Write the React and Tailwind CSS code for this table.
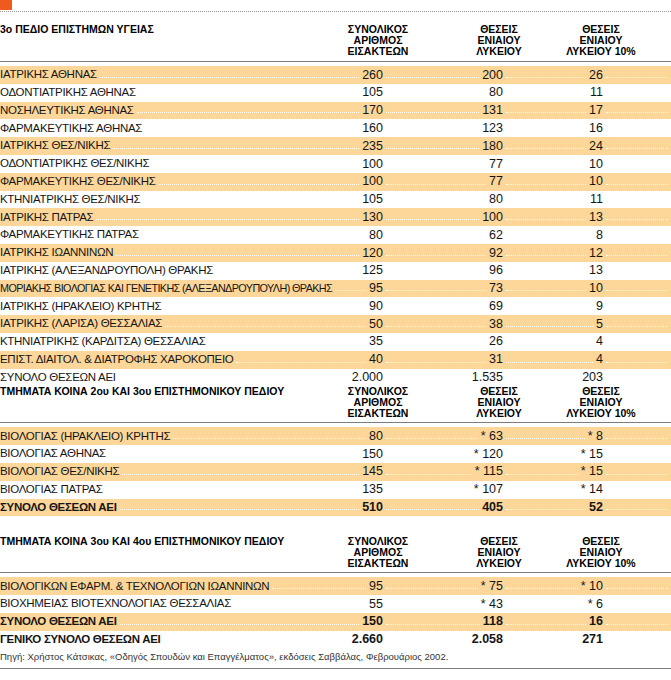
import clsx from "clsx";

const FONT = { fontFamily: '"Liberation Sans", Arial, sans-serif' };

const section1 = [
  ["ΙΑΤΡΙΚΗΣ ΑΘΗΝΑΣ", "260", "200", "26"],
  ["ΟΔΟΝΤΙΑΤΡΙΚΗΣ ΑΘΗΝΑΣ", "105", "80", "11"],
  ["ΝΟΣΗΛΕΥΤΙΚΗΣ ΑΘΗΝΑΣ", "170", "131", "17"],
  ["ΦΑΡΜΑΚΕΥΤΙΚΗΣ ΑΘΗΝΑΣ", "160", "123", "16"],
  ["ΙΑΤΡΙΚΗΣ ΘΕΣ/ΝΙΚΗΣ", "235", "180", "24"],
  ["ΟΔΟΝΤΙΑΤΡΙΚΗΣ ΘΕΣ/ΝΙΚΗΣ", "100", "77", "10"],
  ["ΦΑΡΜΑΚΕΥΤΙΚΗΣ ΘΕΣ/ΝΙΚΗΣ", "100", "77", "10"],
  ["ΚΤΗΝΙΑΤΡΙΚΗΣ ΘΕΣ/ΝΙΚΗΣ", "105", "80", "11"],
  ["ΙΑΤΡΙΚΗΣ ΠΑΤΡΑΣ", "130", "100", "13"],
  ["ΦΑΡΜΑΚΕΥΤΙΚΗΣ ΠΑΤΡΑΣ", "80", "62", "8"],
  ["ΙΑΤΡΙΚΗΣ ΙΩΑΝΝΙΝΩΝ", "120", "92", "12"],
  ["ΙΑΤΡΙΚΗΣ (ΑΛΕΞΑΝΔΡΟΥΠΟΛΗ) ΘΡΑΚΗΣ", "125", "96", "13"],
  ["ΜΟΡΙΑΚΗΣ ΒΙΟΛΟΓΙΑΣ ΚΑΙ ΓΕΝΕΤΙΚΗΣ (ΑΛΕΞΑΝΔΡΟΥΠΟΥΛΗ) ΘΡΑΚΗΣ", "95", "73", "10"],
  ["ΙΑΤΡΙΚΗΣ (ΗΡΑΚΛΕΙΟ) ΚΡΗΤΗΣ", "90", "69", "9"],
  ["ΙΑΤΡΙΚΗΣ (ΛΑΡΙΣΑ) ΘΕΣΣΑΛΙΑΣ", "50", "38", "5"],
  ["ΚΤΗΝΙΑΤΡΙΚΗΣ (ΚΑΡΔΙΤΣΑ) ΘΕΣΣΑΛΙΑΣ", "35", "26", "4"],
  ["ΕΠΙΣΤ. ΔΙΑΙΤΟΛ. & ΔΙΑΤΡΟΦΗΣ ΧΑΡΟΚΟΠΕΙΟ", "40", "31", "4"],
];

const section2 = [
  ["ΒΙΟΛΟΓΙΑΣ (ΗΡΑΚΛΕΙΟ) ΚΡΗΤΗΣ", "80", "* 63", "* 8"],
  ["ΒΙΟΛΟΓΙΑΣ ΑΘΗΝΑΣ", "150", "* 120", "* 15"],
  ["ΒΙΟΛΟΓΙΑΣ ΘΕΣ/ΝΙΚΗΣ", "145", "* 115", "* 15"],
  ["ΒΙΟΛΟΓΙΑΣ ΠΑΤΡΑΣ", "135", "* 107", "* 14"],
];

const section3 = [
  ["ΒΙΟΛΟΓΙΚΩΝ ΕΦΑΡΜ. & ΤΕΧΝΟΛΟΓΙΩΝ ΙΩΑΝΝΙΝΩΝ", "95", "* 75", "* 10"],
  ["ΒΙΟΧΗΜΕΙΑΣ ΒΙΟΤΕΧΝΟΛΟΓΙΑΣ ΘΕΣΣΑΛΙΑΣ", "55", "* 43", "* 6"],
];

function Dots() {
  return <span className="mx-[3px] mb-[6px] h-0 flex-1 self-end border-b border-dotted border-white" />;
}

function Row({ label, a, b, c, band, bold }) {
  // the long molecular-biology label is set tighter in the original
  const tight = label.length > 50;
  return (
    <div
      className={clsx(
        "flex h-[17.8px] items-stretch text-[#151515]",
        band && "bg-[#fdd69a]",
        bold && "font-bold"
      )}
    >
      <div className="flex w-[383px] items-center">
        <span
          className={clsx(
            "whitespace-nowrap",
            tight ? "text-[10.8px] tracking-[-0.6px]" : "text-[11.5px] tracking-[-0.3px]"
          )}
        >
          {label}
        </span>
        <Dots />
        <span className="whitespace-nowrap text-[12.5px]">{a}</span>
      </div>
      <div className="flex w-[120px] items-center">
        <Dots />
        <span className="whitespace-nowrap text-[12.5px]">{b}</span>
      </div>
      <div className="flex w-[100px] items-center">
        <Dots />
        <span className="whitespace-nowrap text-[12.5px]">{c}</span>
      </div>
      <div className="flex flex-1">
        <Dots />
      </div>
    </div>
  );
}

function Header({ title }) {
  return (
    <div className="flex items-start text-[10.5px] font-bold leading-[11px] text-black">
      <div className="w-[338px] whitespace-nowrap">{title}</div>
      <div className="w-[80px] text-center">
        ΣΥΝΟΛΙΚΟΣ
        <br />
        ΑΡΙΘΜΟΣ
        <br />
        ΕΙΣΑΚΤΕΩΝ
      </div>
      <div className="ml-[41px] w-[80px] text-center">
        ΘΕΣΕΙΣ
        <br />
        ΕΝΙΑΙΟΥ
        <br />
        ΛΥΚΕΙΟΥ
      </div>
      <div className="ml-[22px] w-[80px] text-center">
        ΘΕΣΕΙΣ
        <br />
        ΕΝΙΑΙΟΥ
        <br />
        ΛΥΚΕΙΟΥ 10%
      </div>
    </div>
  );
}

export default function App() {
  return (
    <div className="h-[680px] w-[671px] bg-white" style={FONT}>
      {/* top marker */}
      <div className="h-[10px] w-[12px] bg-[#f05a1e]" />
      <div className="mt-[1px] border-t border-dotted border-[#9a9a9a]" />

      {/* 3ο πεδίο */}
      <div className="pt-[12px]">
        <Header title="3ο ΠΕΔΙΟ ΕΠΙΣΤΗΜΩΝ ΥΓΕΙΑΣ" />
      </div>
      <div className="mt-[4px] h-px bg-[#7d7d7d]" />
      <div className="mt-[4px]">
        {section1.map(([label, a, b, c], i) => (
          <Row key={label} label={label} a={a} b={b} c={c} band={i % 2 === 0} />
        ))}
        <Row label="ΣΥΝΟΛΟ ΘΕΣΕΩΝ ΑΕΙ" a="2.000" b="1.535" c="203" />
      </div>

      {/* κοινά 2ου και 3ου */}
      <Header title="ΤΜΗΜΑΤΑ ΚΟΙΝΑ 2ου ΚΑΙ 3ου ΕΠΙΣΤΗΜΟΝΙΚΟΥ ΠΕΔΙΟΥ" />
      <div className="mt-[3px] h-px bg-[#7d7d7d]" />
      <div className="mt-[4px]">
        {section2.map(([label, a, b, c], i) => (
          <Row key={label} label={label} a={a} b={b} c={c} band={i % 2 === 0} />
        ))}
        <Row label="ΣΥΝΟΛΟ ΘΕΣΕΩΝ ΑΕΙ" a="510" b="405" c="52" band bold />
      </div>

      {/* κοινά 3ου και 4ου */}
      <div className="mt-[20px]">
        <Header title="ΤΜΗΜΑΤΑ ΚΟΙΝΑ 3ου ΚΑΙ 4ου ΕΠΙΣΤΗΜΟΝΙΚΟΥ ΠΕΔΙΟΥ" />
      </div>
      <div className="mt-[3px] h-px bg-[#7d7d7d]" />
      <div className="mt-[4px]">
        {section3.map(([label, a, b, c], i) => (
          <Row key={label} label={label} a={a} b={b} c={c} band={i % 2 === 0} />
        ))}
        <Row label="ΣΥΝΟΛΟ ΘΕΣΕΩΝ ΑΕΙ" a="150" b="118" c="16" band bold />
        <Row label="ΓΕΝΙΚΟ ΣΥΝΟΛΟ ΘΕΣΕΩΝ ΑΕΙ" a="2.660" b="2.058" c="271" bold />
      </div>

      <p className="flex h-[17px] items-center whitespace-nowrap text-[9.5px] text-[#333]">
        Πηγή: Χρήστος Κάτσικας, «Οδηγός Σπουδών και Επαγγέλματος», εκδόσεις Σαββάλας, Φεβρουάριος 2002.
      </p>
      <div className="mt-[2px] h-px bg-[#7d7d7d]" />
    </div>
  );
}
